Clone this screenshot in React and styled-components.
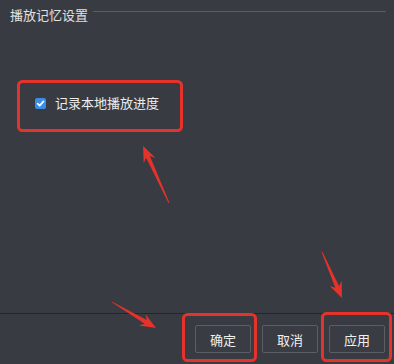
import React from "react";
import styled, { createGlobalStyle } from "styled-components";

const Global = createGlobalStyle`
  html, body { margin: 0; padding: 0; background: #393b42; }
  * { box-sizing: border-box; }
`;

const Page = styled.div`
  position: relative;
  width: 394px;
  height: 364px;
  background: #393b42;
  display: flex;
  flex-direction: column;
  font-family: "Noto Sans CJK SC", "Microsoft YaHei", sans-serif;
  color: #e6e6e6;
  overflow: hidden;
`;

const Legend = styled.div`
  display: flex;
  align-items: center;
  gap: 5px;
  padding: 3px 8px 0 10px;
  height: 22px;
`;

const LegendText = styled.span`
  font-size: 13px;
  line-height: 16px;
  color: #e2e2e2;
  position: relative;
  top: 2px;
`;

const LegendLine = styled.div`
  flex: 1;
  height: 1px;
  background: #5a5d66;
  margin-top: -3px;
`;

const Body = styled.div`
  flex: 1;
  padding: 73px 0 0 35px;
`;

const CheckRow = styled.label`
  display: flex;
  align-items: center;
  gap: 9px;
  font-size: 13px;
  line-height: 16px;
  color: #ececec;
`;

const Box = styled.span`
  width: 11px;
  height: 11px;
  border-radius: 2px;
  background: #3a8ee6;
  display: flex;
  align-items: center;
  justify-content: center;
`;

const Footer = styled.div`
  border-top: 1px solid #24262a;
  display: flex;
  justify-content: flex-end;
  gap: 11px;
  padding: 11px 9px 11px 0;
`;

const Button = styled.button`
  width: 56px;
  height: 28px;
  background: #3a3c43;
  border: 1px solid #5b5e65;
  border-radius: 2px;
  color: #f0f0f0;
  font-family: "Noto Sans CJK SC", sans-serif;
  font-size: 13px;
  padding: 0;
`;

const Overlay = styled.svg`
  position: absolute;
  left: 0;
  top: 0;
  pointer-events: none;
`;

function arrowPoints(x1, y1, x2, y2) {
  const dx = x2 - x1, dy = y2 - y1;
  const len = Math.hypot(dx, dy);
  const ux = dx / len, uy = dy / len;
  const nx = -uy, ny = ux;
  const L = 15, W = 6.5, notch = 3;
  const bx = x2 - ux * L, by = y2 - uy * L;
  const nbx = bx + ux * notch, nby = by + uy * notch;
  const p = (x, y) => `${x.toFixed(1)},${y.toFixed(1)}`;
  return [
    p(x1 + nx * 0.4, y1 + ny * 0.4),
    p(nbx + nx * 2.1, nby + ny * 2.1),
    p(bx - ux * 1 + nx * W, by - uy * 1 + ny * W),
    p(x2, y2),
    p(bx - ux * 1 - nx * W, by - uy * 1 - ny * W),
    p(nbx - nx * 2.1, nby - ny * 2.1),
    p(x1 - nx * 0.4, y1 - ny * 0.4),
  ].join(" ");
}

const RED = "#e5322b";

export default function App() {
  return (
    <>
      <Global />
      <Page>
        <Legend>
          <LegendText>播放记忆设置</LegendText>
          <LegendLine />
        </Legend>
        <Body>
          <CheckRow>
            <Box>
              <svg width="9" height="9" viewBox="0 0 9 9">
                <path d="M1.6 4.6 L3.7 6.6 L7.5 2.4" fill="none" stroke="#fff" strokeWidth="1.7" strokeLinecap="round" strokeLinejoin="round" />
              </svg>
            </Box>
            记录本地播放进度
          </CheckRow>
        </Body>
        <Footer>
          <Button>确定</Button>
          <Button>取消</Button>
          <Button>应用</Button>
        </Footer>
        <Overlay width="394" height="364" viewBox="0 0 394 364">
          <g fill="none" stroke={RED} strokeWidth="3">
            <rect x="18.5" y="81.5" width="163" height="49" rx="4" />
            <rect x="183.5" y="314.5" width="72" height="46" rx="4" />
            <rect x="322.5" y="313.5" width="68" height="47" rx="4" />
          </g>
          <g fill={RED}>
            <polygon points={arrowPoints(169, 203, 143, 146)} />
            <polygon points={arrowPoints(112, 302, 156, 328)} />
            <polygon points={arrowPoints(322, 252, 342, 298)} />
          </g>
        </Overlay>
      </Page>
    </>
  );
}
